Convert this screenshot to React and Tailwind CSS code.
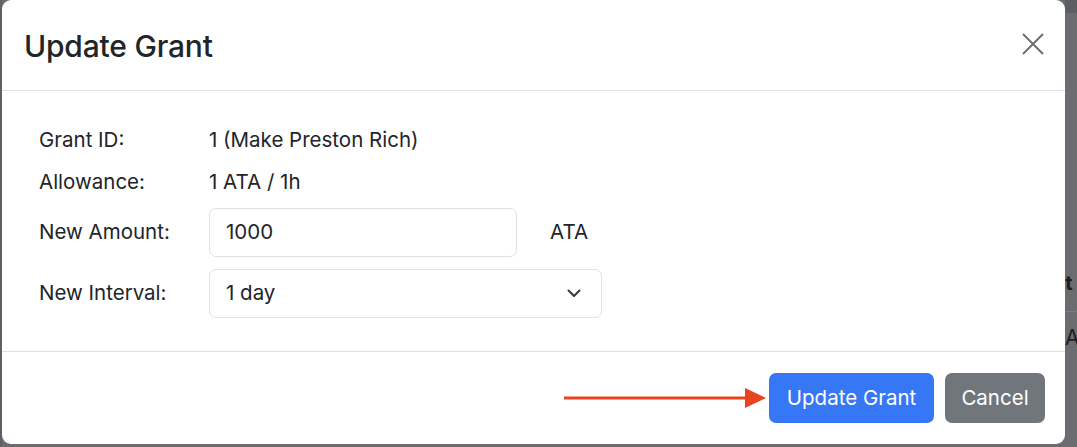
import React from "react";

export default function App() {
  const font = { fontFamily: "Inter, 'Liberation Sans', sans-serif" };
  return (
    <div className="w-[1077px] h-[447px] bg-[#6b6c6f] flex overflow-hidden" style={font}>
      <div className="w-[2px] shrink-0 bg-[#606164]" />
      <div className="w-[1063px] h-[444px] shrink-0 bg-white rounded-[9px] flex flex-col text-[#212529]">
        <div className="h-[91px] shrink-0 border-b border-[#dee2e6] flex items-center justify-between pl-[22px] pr-[19px]">
          <h1 className="text-[30px] font-medium tracking-[-0.2px] leading-none mt-[2px]">Update Grant</h1>
          <button className="w-[24px] h-[24px] flex items-center justify-center text-[#6c6f73] mr-[1px] mt-[-2px]">
            <svg width="22" height="22" viewBox="0 0 22 22" fill="none" stroke="currentColor" strokeWidth="2">
              <path d="M1 1 L21 21 M21 1 L1 21" />
            </svg>
          </button>
        </div>
        <div className="flex-1 flex flex-col pt-[28px] pl-[37px] text-[20.5px]">
          <div className="h-[42px] flex items-center">
            <div className="w-[170px]">Grant ID:</div>
            <div>1 (Make Preston Rich)</div>
          </div>
          <div className="h-[42px] flex items-center">
            <div className="w-[170px]">Allowance:</div>
            <div>1 ATA / 1h</div>
          </div>
          <div className="h-[49px] mt-[5px] flex items-center">
            <div className="w-[170px]">New Amount:</div>
            <div className="w-[308px] h-[49px] border border-[#dee2e6] rounded-[7px] flex items-center pl-[16px]">1000</div>
            <div className="ml-[33px]">ATA</div>
          </div>
          <div className="h-[49px] mt-[12px] flex items-center">
            <div className="w-[170px]">New Interval:</div>
            <div className="w-[393px] h-[49px] border border-[#dee2e6] rounded-[7px] flex items-center justify-between pl-[16px] pr-[20px]">
              <span>1 day</span>
              <svg width="14" height="9" viewBox="0 0 14 9" fill="none" stroke="#343a40" strokeWidth="2" strokeLinecap="round" strokeLinejoin="round">
                <path d="M1.5 1.5 L7 7 L12.5 1.5" />
              </svg>
            </div>
          </div>
        </div>
        <div className="h-[93px] shrink-0 border-t border-[#dee2e6] flex items-center justify-end pr-[20px] text-[20.5px]">
          <svg width="203" height="22" viewBox="0 0 203 22" className="mr-[2px]">
            <line x1="0" y1="11" x2="184" y2="11" stroke="#e8441f" strokeWidth="3" />
            <polygon points="181,1 202,11 181,21" fill="#e8441f" />
          </svg>
          <button className="h-[50px] w-[165px] rounded-[7px] bg-[#3677f6] text-white">Update Grant</button>
          <button className="h-[50px] w-[100px] ml-[11px] rounded-[7px] bg-[#71767c] text-white">Cancel</button>
        </div>
      </div>
      <div className="flex-1 flex flex-col bg-[#6b6c6f] overflow-hidden">
        <div className="h-[13px] shrink-0 bg-[#5b5e63]" />
        <div className="h-[252px] shrink-0" />
        <div className="h-[36px] shrink-0 text-[20px] font-bold text-[#1c1d1f] leading-[36px] ml-[-12px] whitespace-nowrap">ot</div>
        <div className="h-[10px] shrink-0" />
        <div className="h-[1px] shrink-0 bg-[#7d7e80]" />
        <div className="h-[11px] shrink-0" />
        <div className="h-[30px] shrink-0 text-[21px] text-[#1c1d1f] leading-[30px] whitespace-nowrap">A</div>
      </div>
    </div>
  );
}
